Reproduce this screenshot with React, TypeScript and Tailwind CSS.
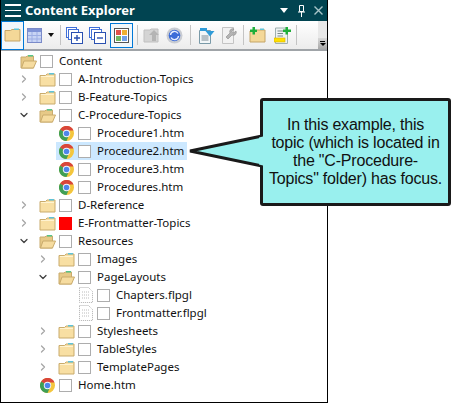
import { ChevronDown, ChevronRight } from "lucide-react";

function FolderClosed() {
  return (
    <svg width="17" height="15" viewBox="0 0 17 15" className="shrink-0">
      <path d="M1 3.5 L1 14 L16 14 L16 2 L8 2 L6.5 3.5 Z" fill="#f8dfa3" stroke="#c9ab6c" />
      <path d="M2 4.5 H15" stroke="#fff3d0" />
      <path d="M10 1 H15 V2.5 H10 Z" fill="#5fc3d8" />
    </svg>
  );
}

function FolderOpen() {
  return (
    <svg width="17" height="15" viewBox="0 0 17 15" className="shrink-0">
      <path d="M1 3 L1 14 L13.5 14 L13.5 2 L7 2 L6 3 Z" fill="#e7c987" stroke="#c9ab6c" />
      <path d="M1.5 14 L4 7 L16.5 7 L13.5 14 Z" fill="#f6dca0" stroke="#c9ab6c" />
      <path d="M8 1 H13 V2.5 H8 Z" fill="#56c48a" />
    </svg>
  );
}

function Chrome() {
  return (
    <svg width="15" height="15" viewBox="0 0 15 15" className="ml-[1px] shrink-0">
      <circle cx="7.5" cy="7.5" r="7.5" fill="#f4c63d" />
      <path d="M7.5 7.5 L1 3.75 A7.5 7.5 0 0 1 14.5 4.5 L7.5 4.5 Z" fill="#d9463a" />
      <path d="M7.5 7.5 L1.1 3.6 A7.5 7.5 0 0 0 7.5 15 L9.5 10.5 Z" fill="#3f9f56" />
      <circle cx="7.5" cy="7.5" r="3.7" fill="#f2f5fb" />
      <circle cx="7.5" cy="7.5" r="2.8" fill="#4f86ea" />
    </svg>
  );
}

function PageFile() {
  return (
    <svg width="14" height="16" viewBox="0 0 14 16" className="ml-[2px] shrink-0">
      <path d="M0.5 0.5 H9.5 L13.5 4.5 V15.5 H0.5 Z" fill="#fff" stroke="#b0b0b0" strokeDasharray="1 1" />
      <path d="M3 5 H11 M3 8 H11 M3 11 H11" stroke="#bcbcbc" strokeDasharray="1 1" />
    </svg>
  );
}

type RowData = {
  label: string;
  level: number;
  icon: "closed" | "open" | "chrome" | "page";
  arrow?: "right" | "down";
  red?: boolean;
  selected?: boolean;
};

const rows: RowData[] = [
  { label: "Content", level: 0, icon: "open" },
  { label: "A-Introduction-Topics", level: 1, icon: "closed", arrow: "right" },
  { label: "B-Feature-Topics", level: 1, icon: "closed", arrow: "right" },
  { label: "C-Procedure-Topics", level: 1, icon: "open", arrow: "down" },
  { label: "Procedure1.htm", level: 2, icon: "chrome" },
  { label: "Procedure2.htm", level: 2, icon: "chrome", selected: true },
  { label: "Procedure3.htm", level: 2, icon: "chrome" },
  { label: "Procedures.htm", level: 2, icon: "chrome" },
  { label: "D-Reference", level: 1, icon: "closed", arrow: "right" },
  { label: "E-Frontmatter-Topics", level: 1, icon: "closed", arrow: "right", red: true },
  { label: "Resources", level: 1, icon: "open", arrow: "down" },
  { label: "Images", level: 2, icon: "closed", arrow: "right" },
  { label: "PageLayouts", level: 2, icon: "open", arrow: "down" },
  { label: "Chapters.flpgl", level: 3, icon: "page" },
  { label: "Frontmatter.flpgl", level: 3, icon: "page" },
  { label: "Stylesheets", level: 2, icon: "closed", arrow: "right" },
  { label: "TableStyles", level: 2, icon: "closed", arrow: "right" },
  { label: "TemplatePages", level: 2, icon: "closed", arrow: "right" },
  { label: "Home.htm", level: 1, icon: "chrome" },
];

const indent: Record<number, string> = {
  0: "pl-[19px]",
  1: "pl-[38px]",
  2: "pl-[57px]",
  3: "pl-[76px]",
};

function Row({ row }: { row: RowData }) {
  const arrowLeft = row.level === 2 ? "left-[36px]" : "left-[17px]";
  return (
    <div className={`relative flex h-[18px] items-center ${indent[row.level]}`}>
      {row.selected && <div className="absolute left-[55px] top-0 h-[18px] w-[131px] bg-[#cce8ff]" />}
      {row.arrow === "right" && (
        <ChevronRight size={12} strokeWidth={2.5} className={`absolute ${arrowLeft} top-[3px] text-[#a6a6a6]`} />
      )}
      {row.arrow === "down" && (
        <ChevronDown size={12} strokeWidth={2.5} className={`absolute ${arrowLeft} top-[3px] text-[#404040]`} />
      )}
      <div className="relative flex w-[20px] shrink-0 items-center">
        {row.icon === "closed" && <FolderClosed />}
        {row.icon === "open" && <FolderOpen />}
        {row.icon === "chrome" && <Chrome />}
        {row.icon === "page" && <PageFile />}
      </div>
      <div
        className={`relative h-[13px] w-[13px] shrink-0 border ${
          row.red ? "border-[#ff0000] bg-[#ff0000]" : "border-[#adadad] bg-white"
        } ${row.selected ? "bg-[#cce8ff]" : ""}`}
      />
      <span className="relative ml-[6px] whitespace-nowrap text-[11.5px] text-[#111]">{row.label}</span>
    </div>
  );
}

function Separator() {
  return <div className="mx-[4px] h-[20px] w-[1px] shrink-0 bg-[#c4c4c4]" />;
}

function Toolbar() {
  return (
    <div className="flex h-[30px] border-b-2 border-[#a0a4a8] bg-gradient-to-b from-white to-[#ececec]">
      <div className="flex flex-1 items-center">
        <div className="flex h-[29px] w-[23px] items-center justify-center border border-[#0078d7] bg-[#f2f7fb]">
          <svg width="17" height="14" viewBox="0 0 17 14">
            <path d="M1 2.5 V13 H16 V1.5 H8 L6.5 2.5 Z" fill="#f4d898" stroke="#c4a568" />
            <path d="M10 0.5 H15 V2 H10 Z" fill="#5fc3d8" />
          </svg>
        </div>
        <svg width="15" height="15" viewBox="0 0 15 15" className="ml-[3px]">
          <rect x="0.5" y="0.5" width="14" height="14" fill="#c8d4f4" stroke="#7a8ac8" />
          <rect x="1" y="1" width="13" height="3" fill="#7f93d6" />
          <path d="M5 4 V14 M10 4 V14 M1 7.5 H14 M1 11 H14" stroke="#9daee4" />
        </svg>
        <svg width="6" height="4" viewBox="0 0 6 4" className="ml-[6px]">
          <path d="M0 0 H6 L3 4 Z" fill="#111" />
        </svg>
        <div className="ml-[2px]">
          <Separator />
        </div>
        <svg width="17" height="17" viewBox="0 0 17 17" className="ml-[1px]">
          <rect x="0.5" y="0.5" width="10" height="10" fill="#fff" stroke="#3f6fd8" />
          <rect x="2.5" y="2.5" width="10" height="10" fill="#fff" stroke="#3f6fd8" />
          <rect x="5.5" y="5.5" width="11" height="11" fill="#fff" stroke="#2a50b0" />
          <path d="M8 11 H14 M11 8 V14" stroke="#2a50b0" strokeWidth="1.4" />
        </svg>
        <svg width="17" height="17" viewBox="0 0 17 17" className="ml-[6px]">
          <rect x="0.5" y="0.5" width="10" height="10" fill="#fff" stroke="#3f6fd8" />
          <rect x="2.5" y="2.5" width="10" height="10" fill="#fff" stroke="#3f6fd8" />
          <rect x="5.5" y="5.5" width="11" height="11" fill="#fff" stroke="#2a50b0" />
          <path d="M8 11 H14" stroke="#2a50b0" strokeWidth="1.4" />
        </svg>
        <div className="ml-[4px] flex h-[25px] w-[23px] items-center justify-center border border-[#0078d7] bg-[#f2f7fb]">
          <svg width="15" height="15" viewBox="0 0 15 15">
            <rect x="0.5" y="0.5" width="14" height="14" fill="#fff" stroke="#555" />
            <rect x="2" y="2" width="5" height="5" fill="#e0504a" />
            <rect x="8" y="2" width="5" height="5" fill="#f0b030" />
            <rect x="2" y="8" width="5" height="5" fill="#70b860" />
            <rect x="8" y="8" width="5" height="5" fill="#70a0e8" />
          </svg>
        </div>
        <Separator />
        <svg width="17" height="16" viewBox="0 0 17 16" className="ml-[1px]">
          <path d="M1 3 V15 H15 V2 H8 L7 3 Z" fill="#d4d4d4" stroke="#c0c0c0" />
          <path d="M11 3 L16 8 H13 V14 H9 V8 H6 Z" fill="#b4b4b4" />
        </svg>
        <svg width="17" height="17" viewBox="0 0 17 17" className="ml-[6px]">
          <circle cx="8.5" cy="8.5" r="8" fill="#c9ccd2" />
          <circle cx="8.5" cy="8.5" r="5.8" fill="#3c6cd8" />
          <path d="M4.5 8 A4 4 0 0 1 12 6.5 M12.5 9 A4 4 0 0 1 5 10.5" fill="none" stroke="#e8eeff" strokeWidth="1.4" />
        </svg>
        <div className="ml-[3px]">
          <Separator />
        </div>
        <svg width="17" height="17" viewBox="0 0 17 17" className="ml-[3px]">
          <path d="M1.5 3.5 H12.5 V16.5 H1.5 Z" fill="#f2f6f8" stroke="#7a9aa8" />
          <path d="M3.5 9 H10.5 M3.5 11 H10.5 M3.5 13 H10.5" stroke="#7a8a94" />
          <path d="M2 1 H9 V4 H12 L16.5 4 L12 9.5 L7.5 4 H2 Z" fill="#2f9bd8" />
        </svg>
        <svg width="16" height="17" viewBox="0 0 16 17" className="ml-[6px]">
          <path d="M1.5 0.5 H12.5 V16.5 H1.5 Z" fill="#f2f2f2" stroke="#c4c4c4" />
          <path d="M5 10 L9 6 A3 3 0 0 1 13 2 L11 4.5 L12.5 6 L15 4 A3 3 0 0 1 11 8 L7 12 Z" fill="#b4b4b4" stroke="#8c8c8c" strokeWidth="0.6" />
        </svg>
        <div className="ml-[2px]">
          <Separator />
        </div>
        <svg width="17" height="16" viewBox="0 0 17 16" className="ml-[1px]">
          <path d="M1 4 V15 H16 V3 H8 L7 4 Z" fill="#f4d898" stroke="#c4a568" />
          <path d="M11 1.5 H15 V3 H11 Z" fill="#5fc3d8" />
          <path d="M3.5 0 H6 V2.5 H8 V5 H6 V7.5 H3.5 V5 H1 V2.5 H3.5 Z" fill="#1fae3a" />
        </svg>
        <svg width="18" height="17" viewBox="0 0 18 17" className="ml-[8px]">
          <path d="M1.5 1 H13.5 V16.5 H1.5 Z" fill="#eef2f2" stroke="#9fb0b0" />
          <path d="M3.5 4 H9 M3.5 6.5 H9 M3.5 9 H9" stroke="#7a8a8a" />
          <rect x="0" y="11" width="11" height="4" fill="#ffe000" stroke="#d8b000" strokeWidth="0.6" />
          <path d="M11.5 0 H14 V2.5 H17 V5 H14 V7.5 H11.5 V5 H9 V2.5 H11.5 Z" fill="#1fae3a" />
        </svg>
        <Separator />
      </div>
      <div className="flex w-[9px] flex-col justify-end bg-[#e8e8e8]">
        <div className="flex h-[11px] flex-col items-center justify-center gap-[1px] bg-gradient-to-b from-[#d8d8d8] to-[#a8a8a8]">
          <div className="h-[1px] w-[5px] bg-black" />
          <svg width="6" height="3" viewBox="0 0 6 3">
            <path d="M0 0 H6 L3 3 Z" fill="#000" />
          </svg>
        </div>
      </div>
    </div>
  );
}

export default function App() {
  return (
    <div className="relative h-[403px] w-[460px] overflow-hidden bg-white font-['Noto_Sans','Open_Sans',sans-serif]">
      <div className="flex h-[403px] w-[328px] flex-col border-x border-b border-black bg-white">
        <div className="flex h-[21px] items-center bg-[#014451] pl-[4px] pr-[1px]">
          <div className="flex w-[16px] flex-col gap-[4px]">
            <div className="h-[1.5px] bg-white" />
            <div className="h-[1.5px] bg-white" />
            <div className="h-[1.5px] bg-white" />
          </div>
          <span className="ml-[4px] flex-1 whitespace-nowrap text-[13px] font-bold leading-none text-white">
            Content Explorer
          </span>
          <svg width="8" height="5" viewBox="0 0 8 5" className="mr-[10px]">
            <path d="M0 0 H8 L4 5 Z" fill="#fff" />
          </svg>
          <svg width="7" height="12" viewBox="0 0 7 12" className="mr-[9px]">
            <path d="M1.5 0.5 H5.5 V6.5 H1.5 Z M0 7 H7 M3.5 7 V12" fill="none" stroke="#fff" />
          </svg>
          <svg width="9" height="9" viewBox="0 0 9 9" className="mr-[3px]">
            <path d="M0.5 0.5 L8.5 8.5 M8.5 0.5 L0.5 8.5" stroke="#a8c4c8" strokeWidth="1.4" />
          </svg>
        </div>
        <Toolbar />
        <div className="pt-[1px]">
          {rows.map((row) => (
            <Row key={row.label} row={row} />
          ))}
        </div>
      </div>

      <svg width="76" height="36" viewBox="0 0 76 36" className="absolute left-[187px] top-[133px] z-10">
        <path d="M75 3 L3 18 L75 33 Z" fill="#99f0ee" stroke="#1a1a1a" strokeWidth="3" />
      </svg>
      <div className="absolute left-[260px] top-[98px] flex h-[108px] w-[191px] items-center justify-center rounded-[3px] border-[3px] border-[#1a1a1a] bg-[#99f0ee] text-center font-['Liberation_Sans',sans-serif] text-[16px] leading-[18px] tracking-[-0.2px] text-[#111]">
        <p>
          In this example, this
          <br />
          topic (which is located in
          <br />
          the "C-Procedure-
          <br />
          Topics" folder) has focus.
        </p>
      </div>
      <svg width="6" height="30" viewBox="0 0 6 30" className="absolute left-[259px] top-[136px] z-20">
        <path d="M0 1.5 L6 0 V30 L0 28.5 Z" fill="#99f0ee" />
      </svg>
    </div>
  );
}
